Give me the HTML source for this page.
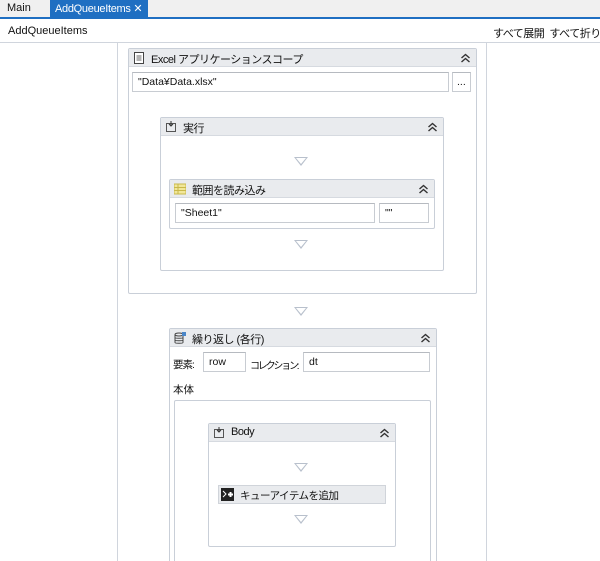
<!DOCTYPE html><html><head><meta charset="utf-8"><style>
*{box-sizing:border-box;margin:0;padding:0}
html,body{width:600px;height:561px;overflow:hidden}
body{background:#fff;font-family:"Liberation Sans","Noto Sans CJK JP",sans-serif;font-size:11px;color:#111;position:relative}
.a{position:absolute;white-space:nowrap}
.box{position:absolute;border:1px solid #c9cfd8;border-radius:2px;background:#fff}
.hd{position:absolute;left:0;right:0;top:0;height:18px;background:#e9ebee;border-bottom:1px solid #d6dae0}
.hd span{position:absolute;left:22px;top:2px;font-size:11px;letter-spacing:-0.5px;white-space:nowrap}
.chev{position:absolute;right:5px;top:4px;width:11px;height:10px}
.inp{position:absolute;border:1px solid #c8ccd2;border-top-color:#b6bac0;background:#fff;font-size:10.5px;padding:3px 0 0 5px;white-space:nowrap;overflow:hidden}
.tri{position:absolute;width:0;height:0;border-left:7px solid transparent;border-right:7px solid transparent;border-top:9px solid #b8c0cc}
.tri::after{content:"";position:absolute;left:-5px;top:-8px;border-left:5px solid transparent;border-right:5px solid transparent;border-top:6.5px solid #fff}
.ic{position:absolute;left:4px;top:3px;width:12px;height:12px}
</style></head><body>
<svg width="0" height="0" style="position:absolute"><defs><symbol id="cv" viewBox="0 0 11 10"><path d="M1.5 5L5.5 1.5 9.5 5M1.5 9L5.5 5.5 9.5 9" fill="none" stroke="#333" stroke-width="1.4"/></symbol></defs></svg>
<div class="a" style="left:0;top:0;width:600px;height:17px;background:#f0f0f0"></div>
<div class="a" style="left:7px;top:2px;font-size:11px">Main</div>
<div class="a" style="left:50px;top:0;width:98px;height:17px;background:#1f6fc2;color:#fff;padding:2px 0 0 5px;overflow:hidden;letter-spacing:-0.3px">AddQueueItems&nbsp;✕</div>
<div class="a" style="left:0;top:17px;width:600px;height:2px;background:#1f6fc2"></div>
<div class="a" style="left:8px;top:25px">AddQueueItems</div>
<div class="a" style="left:493px;top:25px;width:107px;overflow:hidden;letter-spacing:-0.5px">すべて展開 &nbsp;すべて折りたたみ</div>
<div class="a" style="left:0;top:42px;width:600px;height:1px;background:#d0d5dd"></div>
<div class="a" style="left:117px;top:43px;width:1px;height:518px;background:#d0d5dd"></div>
<div class="a" style="left:486px;top:43px;width:1px;height:518px;background:#d0d5dd"></div>

<div class="box" style="left:128px;top:48px;width:349px;height:246px">
<div class="hd"><svg class="ic" viewBox="0 0 12 12"><rect x="1.5" y="0.5" width="9" height="11" fill="#fff" stroke="#444"/><path d="M3.5 4h5M3.5 6h5M3.5 8h5" stroke="#666"/></svg><span>Excel アプリケーションスコープ</span><svg class="chev"><use href="#cv"/></svg></div>
<div class="inp" style="left:3px;top:23px;width:317px;height:20px">"Data¥Data.xlsx"</div>
<div class="inp" style="left:323px;top:23px;width:19px;height:20px;padding-left:4px">...</div>
</div>

<div class="box" style="left:160px;top:117px;width:284px;height:154px">
<div class="hd"><svg class="ic" viewBox="0 0 12 12"><rect x="1.5" y="2.5" width="9" height="8" fill="none" stroke="#555"/><path d="M6 0v5M4 3l2 2 2-2" stroke="#333" fill="none"/></svg><span>実行</span><svg class="chev"><use href="#cv"/></svg></div>
</div>
<div class="tri" style="left:294px;top:157px"></div>
<div class="box" style="left:169px;top:179px;width:266px;height:50px">
<div class="hd"><svg class="ic" viewBox="0 0 12 12"><rect x="0" y="1" width="12" height="10" fill="#f1e79a" stroke="#c9b84a"/><path d="M0 4.5h12M0 7.5h12M4 1v10" stroke="#c9b84a"/></svg><span>範囲を読み込み</span><svg class="chev"><use href="#cv"/></svg></div>
<div class="inp" style="left:5px;top:23px;width:200px;height:20px">"Sheet1"</div>
<div class="inp" style="left:209px;top:23px;width:50px;height:20px">""</div>
</div>
<div class="tri" style="left:294px;top:240px"></div>
<div class="tri" style="left:294px;top:307px"></div>

<div class="box" style="left:169px;top:328px;width:268px;height:240px">
<div class="hd"><svg class="ic" viewBox="0 0 12 12"><ellipse cx="5" cy="2.5" rx="4" ry="1.5" fill="none" stroke="#444"/><path d="M1 2.5v8c0 1 8 1 8 0v-8M1 5.5c0 1 8 1 8 0M1 8c0 1 8 1 8 0" fill="none" stroke="#444"/><rect x="8" y="0" width="4" height="4" fill="#4a86c8"/></svg><span>繰り返し (各行)</span><svg class="chev"><use href="#cv"/></svg></div>
<div class="a" style="left:3px;top:28px;font-size:10.5px;letter-spacing:-1px">要素:</div>
<div class="inp" style="left:33px;top:23px;width:43px;height:20px">row</div>
<div class="a" style="left:80px;top:28px;font-size:10px;letter-spacing:-2.2px">コレクション:</div>
<div class="inp" style="left:133px;top:23px;width:127px;height:20px">dt</div>
<div class="a" style="left:3px;top:53px;font-size:10.5px">本体</div>
<div class="box" style="left:4px;top:71px;width:257px;height:180px"></div>
</div>

<div class="box" style="left:208px;top:423px;width:188px;height:124px">
<div class="hd"><svg class="ic" viewBox="0 0 12 12"><rect x="1.5" y="2.5" width="9" height="8" fill="none" stroke="#555"/><path d="M6 0v5M4 3l2 2 2-2" stroke="#333" fill="none"/></svg><span>Body</span><svg class="chev"><use href="#cv"/></svg></div>
</div>
<div class="tri" style="left:294px;top:463px"></div>
<div class="a" style="left:218px;top:485px;width:168px;height:19px;background:#e9ebee;border:1px solid #d0d4da"><svg style="position:absolute;left:2px;top:2px" width="13" height="13" viewBox="0 0 13 13"><rect width="13" height="13" fill="#222"/><path d="M7 6.5h5M9.5 4v5" stroke="#fff" stroke-width="2"/><path d="M2 3l3 3-3 3" stroke="#fff" fill="none"/></svg><span style="position:absolute;left:21px;top:2px;font-size:10.5px;letter-spacing:-0.5px">キューアイテムを追加</span></div>
<div class="tri" style="left:294px;top:515px"></div>
</body></html>
